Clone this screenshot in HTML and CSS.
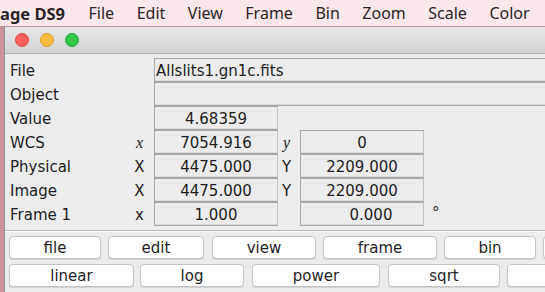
FILE: index.html
```html
<!DOCTYPE html>
<html lang="en">
<head>
    <meta charset="UTF-8">
    <meta name="viewport" content="width=device-width, initial-scale=1.0">
    <title>SAOImage DS9</title>
    <link rel="stylesheet" href="styles.css">
</head>
<body>
    <div class="menubar">
        <span class="app-name">age DS9</span>
        <span>File</span>
        <span>Edit</span>
        <span>View</span>
        <span>Frame</span>
        <span>Bin</span>
        <span>Zoom</span>
        <span>Scale</span>
        <span>Color</span>
    </div>
    <div class="desktop">
        <div class="window">
            <div class="titlebar">
                <span class="light red"></span>
                <span class="light yellow"></span>
                <span class="light green"></span>
            </div>
            <div class="info">
                <div class="label">File</div>
                <div></div>
                <div class="field wide left">Allslits1.gn1c.fits</div>

                <div class="label">Object</div>
                <div></div>
                <div class="field wide"></div>

                <div class="label">Value</div>
                <div></div>
                <div class="field">4.68359</div>
                <div></div><div></div><div></div>

                <div class="label">WCS</div>
                <div class="axis serif">x</div>
                <div class="field">7054.916</div>
                <div class="axis serif">y</div>
                <div class="field">0</div>
                <div></div>

                <div class="label">Physical</div>
                <div class="axis">X</div>
                <div class="field">4475.000</div>
                <div class="axis">Y</div>
                <div class="field">2209.000</div>
                <div></div>

                <div class="label">Image</div>
                <div class="axis">X</div>
                <div class="field">4475.000</div>
                <div class="axis">Y</div>
                <div class="field">2209.000</div>
                <div></div>

                <div class="label">Frame 1</div>
                <div class="axis">x</div>
                <div class="field">1.000</div>
                <div></div>
                <div class="field angle">0.000</div>
                <div class="unit">&deg;</div>
            </div>
            <div class="buttons">
                <div class="btn-row row-major">
                    <button>file</button>
                    <button>edit</button>
                    <button>view</button>
                    <button>frame</button>
                    <button>bin</button>
                    <button></button>
                </div>
                <div class="btn-row row-scale">
                    <button>linear</button>
                    <button>log</button>
                    <button>power</button>
                    <button>sqrt</button>
                    <button></button>
                </div>
            </div>
        </div>
    </div>
</body>
</html>
```

FILE: styles.css
```css
html, body {
    margin: 0;
    padding: 0;
    width: 545px;
    height: 292px;
    overflow: hidden;
    background: #c9939a;
    font-family: "DejaVu Sans", sans-serif;
}
.menubar {
    height: 27px;
    box-sizing: border-box;
    border-bottom: 1px solid #b89aa0;
    background: #fce8ec;
    display: flex;
    align-items: center;
    gap: 22.5px;
    white-space: nowrap;
    font-family: "Noto Sans", sans-serif;
    font-size: 16px;
    color: #2b2326;
}
.menubar .app-name {
    font-weight: bold;
    font-size: 16.5px;
    margin-right: 1px;
}
.desktop {
    padding-left: 4px;
}
.window {
    width: 640px;
    height: 270px;
    border-left: 1px solid #9a8a8c;
    background: #ececec;
}
.titlebar {
    height: 26px;
    border-bottom: 1px solid #b3b3b3;
    background: linear-gradient(#e7e7e7, #d2d2d2);
    display: flex;
    align-items: center;
    gap: 11px;
    padding-left: 10px;
}
.light {
    width: 12px;
    height: 12px;
    border-radius: 50%;
}
.red {
    background: #fc605c;
    border: 1px solid #de4a46;
}
.yellow {
    background: #fdbc40;
    border: 1px solid #dd9f2b;
}
.green {
    background: #34c84a;
    border: 1px solid #27a83a;
}
.info {
    display: grid;
    grid-template-columns: 120px 24px 124px 22px 124px 1fr;
    grid-auto-rows: 24px;
    padding: 4px 0 4px 5px;
    border-bottom: 1px solid #b9b9b9;
    box-shadow: 0 1px 0 #f8f8f8;
    font-size: 15px;
    color: #1c1c1c;
}
.info > div {
    box-sizing: border-box;
    padding-top: 2px;
}
.label {
    display: flex;
    align-items: center;
}
.axis {
    display: flex;
    align-items: center;
    justify-content: center;
    padding-right: 5px;
}
.serif {
    font-family: "Liberation Serif", serif;
    font-style: italic;
    font-size: 16px;
}
.field {
    border: 1px solid #a8a8a8;
    border-right-color: #c4c4c4;
    box-shadow: inset 0 -1px 0 #d9d9d9;
    display: flex;
    align-items: center;
    justify-content: center;
    white-space: nowrap;
    overflow: hidden;
}
.field.wide {
    grid-column: 3 / -1;
}
.field.left {
    justify-content: flex-start;
    padding-left: 1px;
}
.field.angle {
    padding-left: 18px;
}
.info > .unit {
    padding: 4px 0 0 8px;
    line-height: 1;
}
.buttons {
    padding: 5px 0 0 4px;
}
.btn-row {
    display: flex;
    gap: 7px;
    margin-bottom: 5px;
}
.btn-row button {
    flex: none;
    height: 23px;
    padding: 1px 0 0;
    background: #fff;
    border: 1px solid #c4c4c4;
    border-radius: 4px;
    box-shadow: 0 1px 1px rgba(0, 0, 0, 0.12);
    font-family: "DejaVu Sans", sans-serif;
    font-size: 15px;
    color: #1f1f1f;
}
.row-major button:nth-child(1) { width: 92px; }
.row-major button:nth-child(2) { width: 96px; }
.row-major button:nth-child(3) { width: 104px; margin-left: 1px; }
.row-major button:nth-child(4) { width: 114px; }
.row-major button:nth-child(5) { width: 92px; }
.row-major button:nth-child(6) { width: 110px; }
.row-scale button:nth-child(1) { width: 125px; }
.row-scale button:nth-child(2) { width: 104px; margin-left: -1px; }
.row-scale button:nth-child(3) { width: 128px; margin-left: 1px; }
.row-scale button:nth-child(4) { width: 112px; margin-left: 1px; }
.row-scale button:nth-child(5) { width: 130px; }
```
